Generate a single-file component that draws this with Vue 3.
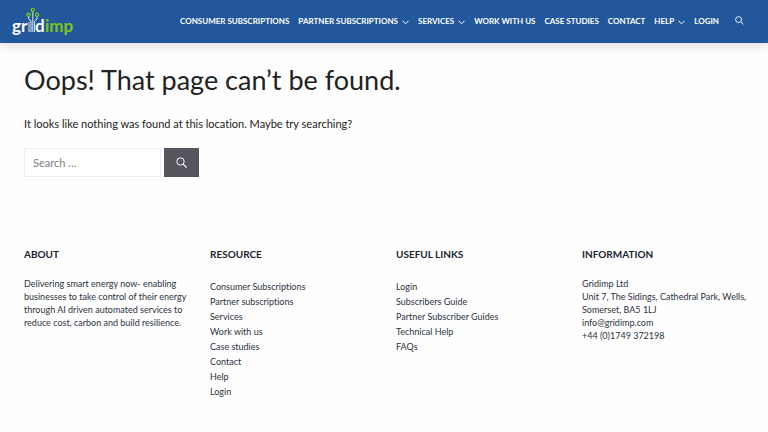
<template>
  <div class="site">
    <header class="site-header">
      <a class="logo" href="#" aria-label="Gridimp home">
        <svg width="66" height="30" viewBox="0 0 66 30">
          <text class="logo-text" x="0" y="25" fill="#ffffff">gr</text>
          <text class="logo-text" x="23" y="25" fill="#ffffff">d</text>
          <text class="logo-text" x="33" y="25" fill="#7ac51d">imp</text>
          <g fill="none" stroke="#dce8f5" stroke-width="1">
            <path d="M17 25V15" />
            <path d="M19 25V14L16.700 12V9" />
            <path d="M20.800 25V4.500" />
            <path d="M22.600 25V14L25 12V9" />
          </g>
          <g fill="#23579b" stroke="#7ac51d" stroke-width="1.300">
            <circle cx="16.500" cy="7.800" r="1.600" />
            <circle cx="20.800" cy="2.900" r="1.600" />
            <circle cx="25" cy="7.800" r="1.600" />
          </g>
        </svg>
      </a>
      <nav class="main-nav" aria-label="Primary">
        <a v-for="item in navItems" :key="item.label" href="#">
          {{ item.label }}
          <svg v-if="item.menu" class="chevron" width="7" height="5" viewBox="0 0 7 5">
            <path d="M0.500 0.800L3.500 3.800L6.500 0.800" fill="none" stroke="currentColor" />
          </svg>
        </a>
        <button class="nav-search" type="button" aria-label="Open search">
          <svg width="9" height="9" viewBox="0 0 10 10" fill="none" stroke="currentColor">
            <circle cx="4" cy="4" r="3.300" />
            <path d="M6.400 6.400L9.300 9.300" />
          </svg>
        </button>
      </nav>
    </header>

    <main class="content">
      <h1>Oops! That page can’t be found.</h1>
      <p>It looks like nothing was found at this location. Maybe try searching?</p>
      <form class="search-form" @submit.prevent>
        <input v-model="query" type="search" placeholder="Search …" aria-label="Search for" />
        <button type="submit" aria-label="Search">
          <svg width="11" height="11" viewBox="0 0 11 11" fill="none" stroke="currentColor">
            <circle cx="4.500" cy="4.500" r="3.700" />
            <path d="M7.200 7.200L10.500 10.500" stroke-width="1.200" />
          </svg>
        </button>
      </form>
    </main>

    <footer class="footer">
      <section>
        <h2>ABOUT</h2>
        <p>Delivering smart energy now- enabling businesses to take control of their energy through AI driven automated services to reduce cost, carbon and build resilience.</p>
      </section>
      <section v-for="column in linkColumns" :key="column.title">
        <h2>{{ column.title }}</h2>
        <ul>
          <li v-for="link in column.links" :key="link"><a href="#">{{ link }}</a></li>
        </ul>
      </section>
      <section>
        <h2>INFORMATION</h2>
        <p>
          Gridimp Ltd<br />
          Unit 7, The Sidings, Cathedral Park, Wells, Somerset, BA5 1LJ<br />
          <a href="mailto:info@gridimp.com">info@gridimp.com</a><br />
          +44 (0)1749 372198
        </p>
      </section>
    </footer>
  </div>
</template>

<script setup>
import { ref } from 'vue';

const query = ref('');

const navItems = [
  { label: 'CONSUMER SUBSCRIPTIONS' },
  { label: 'PARTNER SUBSCRIPTIONS', menu: true },
  { label: 'SERVICES', menu: true },
  { label: 'WORK WITH US' },
  { label: 'CASE STUDIES' },
  { label: 'CONTACT' },
  { label: 'HELP', menu: true },
  { label: 'LOGIN' }
];

const linkColumns = [
  {
    title: 'RESOURCE',
    links: [
      'Consumer Subscriptions',
      'Partner subscriptions',
      'Services',
      'Work with us',
      'Case studies',
      'Contact',
      'Help',
      'Login'
    ]
  },
  {
    title: 'USEFUL LINKS',
    links: ['Login', 'Subscribers Guide', 'Partner Subscriber Guides', 'Technical Help', 'FAQs']
  }
];
</script>

<style>
body {
  margin: 0;
  background: #fefefe;
}
</style>

<style scoped>
.site {
  font-family: Lato, "Open Sans", sans-serif;
  font-variant-ligatures: none;
  color: #222222;
}

a {
  color: inherit;
  text-decoration: none;
}

.site-header {
  display: flex;
  align-items: center;
  justify-content: space-between;
  height: 43px;
  padding: 0 24px 0 12px;
  background: #23579b;
  color: #ffffff;
  box-shadow: 0 2px 12px rgba(0, 0, 0, 0.15);
}

.logo svg {
  display: block;
}

.logo-text {
  font-size: 17px;
  font-weight: 700;
}

.main-nav {
  display: flex;
  align-items: center;
  gap: 9px;
  padding-bottom: 2px;
  font-size: 8px;
  font-weight: 700;
  line-height: 16px;
  white-space: nowrap;
}

.main-nav a {
  display: flex;
  align-items: center;
  gap: 4px;
}

.chevron {
  margin-top: 3px;
}

button {
  display: flex;
  align-items: center;
  justify-content: center;
  padding: 0;
  border: 0;
  background: none;
  color: #ffffff;
  cursor: pointer;
}

.nav-search {
  margin-left: 7px;
}

.content {
  padding: 17px 24px 0;
}

h1 {
  margin: 0 0 15px;
  font-size: 27px;
  font-weight: 400;
  line-height: 40px;
}

.content p {
  margin: 0 0 15px;
  font-size: 11px;
  line-height: 18px;
}

.search-form {
  display: flex;
  gap: 3px;
}

.search-form input {
  box-sizing: border-box;
  width: 137px;
  height: 29px;
  padding: 0 8px;
  border: 1px solid #eeeef2;
  border-radius: 0;
  background: #ffffff;
  color: #555555;
  font-family: inherit;
  font-size: 11px;
  appearance: none;
}

.search-form input::placeholder {
  color: #808080;
  opacity: 1;
}

.search-form button {
  width: 35px;
  background: #55555e;
}

.footer {
  display: grid;
  grid-template-columns: repeat(4, 1fr);
  padding: 69px 0 24px 24px;
  color: #2b3340;
}

.footer section {
  padding-right: 16px;
}

h2 {
  margin: 0 0 15px;
  color: #1b2430;
  font-size: 10px;
  font-weight: 700;
  line-height: 16px;
}

.footer p {
  margin: 0;
  font-size: 9px;
  line-height: 13px;
}

ul {
  margin: 0;
  padding: 2px 0 0;
  list-style: none;
  font-size: 9px;
  line-height: 15px;
}
</style>
